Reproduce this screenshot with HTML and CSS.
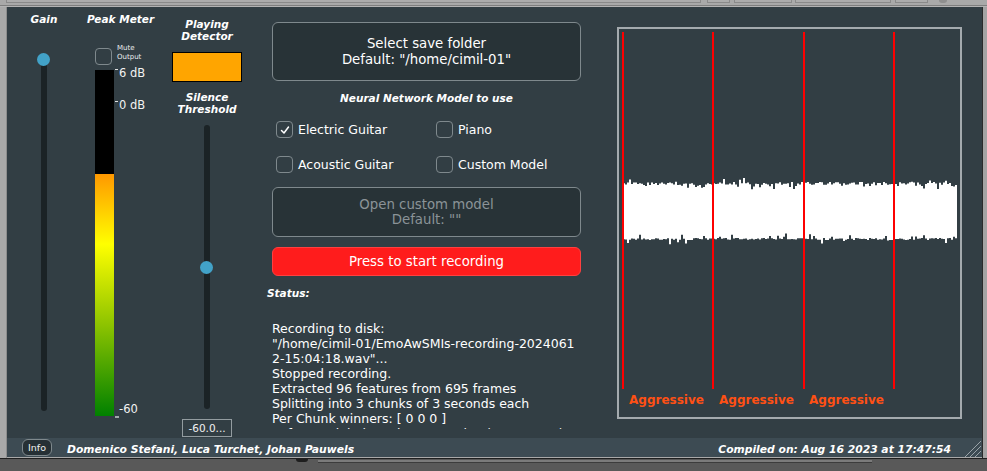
FILE: index.html
```html
<!DOCTYPE html>
<html>
<head>
<meta charset="utf-8">
<title>EmoAwSMIs</title>
<link rel="stylesheet" href="styles.css">
</head>
<body>
<div class="screen">
  <div class="titlestrip">
    <div class="tb tb1"></div>
    <div class="tb tb2"></div>
    <div class="tb tb3"></div>
    <div class="tb tb4"></div>
    <div class="tb tb5"></div>
    <div class="tb-dot"></div>
  </div>
  <div class="window">
    <div class="frame-left"></div>
    <div class="app">
      <div class="panel">
        <div class="col col-gain">
          <div class="label">Gain</div>
          <div class="vslider gain-slider">
            <div class="track"></div>
            <div class="thumb gain-thumb"></div>
          </div>
        </div>

        <div class="col col-meter">
          <div class="label">Peak Meter</div>
          <div class="mute-row">
            <div class="checkbox"></div>
            <div class="mute-text">Mute<br>Output</div>
          </div>
          <div class="meter-wrap">
            <div class="meter">
              <div class="meter-black"></div>
              <div class="meter-fill"></div>
            </div>
            <div class="meter-scale">
              <div class="tick tick-6"></div>
              <div class="scale-label sl-6">6 dB</div>
              <div class="tick tick-0"></div>
              <div class="scale-label sl-0">0 dB</div>
              <div class="scale-label sl-60">-60</div>
              <div class="tick tick-60"></div>
            </div>
          </div>
        </div>

        <div class="col col-detector">
          <div class="label label-2 playing-label">Playing<br>Detector</div>
          <div class="detector-box"></div>
          <div class="label label-2 silence-label">Silence<br>Threshold</div>
          <div class="vslider silence-slider">
            <div class="track"></div>
            <div class="thumb silence-thumb"></div>
          </div>
          <div class="value-box">-60.0...</div>
        </div>

        <div class="col col-mid">
          <div class="btn btn-folder">Select save folder<br>Default: "/home/cimil-01"</div>
          <div class="label model-label">Neural Network Model to use</div>
          <div class="model-grid">
            <div class="opt"><div class="checkbox checked"><svg viewBox="0 0 16 16" width="16" height="16"><polyline points="4.5,8.5 7,11 11.5,5" fill="none" stroke="#fff" stroke-width="1.5" stroke-linecap="round" stroke-linejoin="round"/></svg></div><span>Electric Guitar</span></div>
            <div class="opt"><div class="checkbox"></div><span>Piano</span></div>
            <div class="opt"><div class="checkbox"></div><span>Acoustic Guitar</span></div>
            <div class="opt"><div class="checkbox"></div><span>Custom Model</span></div>
          </div>
          <div class="btn btn-custom">Open custom model<br>Default: ""</div>
          <div class="btn btn-record">Press to start recording</div>
          <div class="label status-label">Status:</div>
          <div class="status-text">
            <div>Recording to disk:</div>
            <div>"/home/cimil-01/EmoAwSMIs-recording-2024061</div>
            <div>2-15:04:18.wav"...</div>
            <div>Stopped recording.</div>
            <div>Extracted 96 features from 695 frames</div>
            <div>Splitting into 3 chunks of 3 seconds each</div>
            <div>Per Chunk winners: [ 0 0 0 ]</div>
            <div>Softmax global result: Aggressive (1.00 / 0.00)</div>
          </div>
        </div>

        <div class="col col-wave">
          <div class="wave-box">
            <svg id="wave" class="wave-svg" width="341" height="388" viewBox="0 0 341 388">
              <path id="wave-path" fill="#ffffff" d=""/>
              <rect x="3" y="3" width="2" height="357" fill="#ff0000"/>
              <rect x="93" y="3" width="2" height="357" fill="#ff0000"/>
              <rect x="184" y="3" width="2" height="357" fill="#ff0000"/>
              <rect x="274" y="3" width="2" height="357" fill="#ff0000"/>
            </svg>
            <div class="chunk-label cl1">Aggressive</div>
            <div class="chunk-label cl2">Aggressive</div>
            <div class="chunk-label cl3">Aggressive</div>
          </div>
        </div>
      </div>

      <div class="bottombar">
        <div class="info-btn">Info</div>
        <div class="authors">Domenico Stefani, Luca Turchet, Johan Pauwels</div>
        <div class="compiled">Compiled on: Aug 16 2023 at 17:47:54</div>
        <div class="grip">
          <svg width="18" height="17" viewBox="0 0 18 17">
            <line x1="17" y1="1" x2="1" y2="17" stroke="#9aa3a8" stroke-width="1"/>
            <line x1="17" y1="6" x2="6" y2="17" stroke="#9aa3a8" stroke-width="1"/>
            <line x1="17" y1="11" x2="11" y2="17" stroke="#9aa3a8" stroke-width="1"/>
          </svg>
        </div>
      </div>
      <div class="app-edge"></div>
    </div>
    <div class="frame-right"></div>
  </div>
  <div class="desk">
    <div class="desk-blob"></div>
    <div class="desk-bar"></div>
  </div>
</div>
<script src="script.js"></script>
</body>
</html>
```

FILE: styles.css
```css
* { box-sizing: border-box; margin: 0; padding: 0; }
html, body { width: 987px; height: 471px; overflow: hidden; }
body {
  background: #5a5a5a;
  font-family: "DejaVu Sans", Verdana, sans-serif;
  color: #ffffff;
}
.screen { display: flex; flex-direction: column; width: 987px; height: 471px; }

/* top strip (bottom of a toolbar above the window) */
.titlestrip {
  height: 7px;
  display: flex;
  align-items: flex-start;
  background: linear-gradient(#a9a9a9 0 5px, #7e7e7e 5px 6px, #b3b3b3 6px);
  padding-left: 6px;
}
.tb {
  height: 3px;
  border: 1px solid #8a8a8a;
  border-top: none;
  background: #acacac;
}
.tb1 { width: 695px; }
.tb2 { width: 23px; margin-left: 6px; }
.tb3 { width: 58px; margin-left: 4px; }
.tb4 { width: 96px; margin-left: 3px; }
.tb5 { width: 33px; margin-left: 4px; }
.tb-dot { width: 8px; height: 3px; margin-left: 11px; background: #8f8f8f; border-radius: 0 0 4px 4px; }

.window { display: flex; height: 451px; }
.frame-left { width: 7px; background: #a9a9a9; border-right: 1px solid #8d8d8d; }
.frame-right { width: 5px; background: #a4a4a4; border-left: 1px solid #2b2b2b; }
.app { width: 975px; display: flex; flex-direction: column; }

.panel {
  height: 431px;
  background: #323e44;
  display: flex;
  align-items: flex-start;
  padding-top: 6px;
}
.col { display: flex; flex-direction: column; }

.label {
  font-weight: bold;
  font-style: italic;
  font-size: 10.5px;
  line-height: 13px;
  text-align: center;
  color: #ffffff;
}
.label-2 { line-height: 12px; }

/* Gain */
.col-gain { width: 74px; align-items: center; }
.vslider { position: relative; width: 14px; }
.vslider .track {
  position: absolute;
  left: 4px;
  width: 6px;
  border-radius: 3px;
  background: #1b2326;
}
.vslider .thumb {
  position: absolute;
  left: 0;
  width: 13px;
  height: 13px;
  border-radius: 50%;
  background: #42a2c8;
}
.gain-slider { margin-top: 27px; height: 358px; }
.gain-slider .track { top: 6px; bottom: 0; }
.gain-thumb { top: 0; }

/* Peak meter */
.col-meter { width: 79px; }
.col-meter .label { width: 79px; }
.mute-row { display: flex; align-items: center; margin-top: 22px; padding-left: 14px; }
.checkbox {
  width: 17px;
  height: 17px;
  border: 1.5px solid #7f898d;
  border-radius: 4px;
  flex: none;
}
.checkbox svg { display: block; margin: -0.5px 0 0 -0.5px; }
.mute-text { font-size: 7px; line-height: 8.5px; margin-left: 5px; color: #e8ecee; margin-top: -8px; }
.meter-wrap { display: flex; margin-top: 5px; padding-left: 14px; }
.meter { width: 19px; height: 346px; display: flex; flex-direction: column; }
.meter-black { height: 104px; background: #000000; }
.meter-fill { flex: 1; background: linear-gradient(to bottom, #ff9800 0%, #ffff00 29%, #8ec400 62%, #008000 100%); }
.meter-scale { position: relative; width: 40px; height: 346px; }
.tick { position: absolute; left: 1px; width: 3px; height: 1px; background: #e0e0e0; }
.tick-6 { top: -1px; }
.tick-0 { top: 31px; }
.tick-60 { top: 346px; height: 2px; width: 4px; background: #a0a8ac; }
.scale-label { position: absolute; left: 5px; font-size: 11.5px; line-height: 14px; color: #f2f2f2; white-space: nowrap; }
.sl-6 { top: -4px; }
.sl-0 { top: 28px; }
.sl-60 { top: 332px; }

/* Detector */
.col-detector { width: 94px; align-items: center; }
.playing-label { margin-top: 5px; }
.detector-box { width: 70px; height: 30px; margin-top: 10px; background: #ffa500; border: 1px solid #000000; }
.silence-label { margin-top: 9px; }
.silence-slider { margin-top: 6px; height: 292px; }
.silence-slider .track { top: 4px; bottom: 4px; }
.silence-thumb { top: 140px; }
.value-box {
  margin-top: 6px;
  width: 50px;
  height: 18px;
  border: 1px solid #939ca0;
  font-size: 10.5px;
  line-height: 16px;
  text-align: center;
  color: #f0f0f0;
}

/* Middle */
.col-mid { width: 309px; margin-left: 18px; padding-top: 9px; }
.btn {
  display: flex;
  align-items: center;
  justify-content: center;
  text-align: center;
  font-size: 13.3px;
  line-height: 16px;
  border-radius: 6px;
  border: 1px solid #7f898d;
  background: #283337;
  color: #ffffff;
}
.btn-folder { height: 59px; }
.model-label { margin-top: 11px; }
.model-grid {
  display: grid;
  grid-template-columns: 160px 140px;
  row-gap: 18px;
  margin-top: 16px;
  padding-left: 4px;
}
.opt { display: flex; align-items: center; font-size: 12.5px; line-height: 17px; }
.opt span { margin-left: 5px; }
.btn-custom { height: 50px; margin-top: 14px; color: #8b9398; line-height: 15px; }
.btn-record { height: 29px; margin-top: 10px; background: #ff1c1c; border-color: #ff4040; }
.status-label { margin-top: 11px; text-align: left; margin-left: -5px; }
.status-text {
  margin-top: 21px;
  height: 108px;
  overflow: hidden;
  font-size: 12.5px;
  line-height: 15px;
  color: #ffffff;
  white-space: nowrap;
}

/* Waveform */
.col-wave { margin-left: 36px; padding-top: 14px; }
.wave-box {
  position: relative;
  width: 345px;
  height: 392px;
  border: 2px solid #a4aaae;
}
.wave-svg { display: block; }
.chunk-label {
  position: absolute;
  top: 363px;
  font-size: 12px;
  line-height: 16px;
  font-weight: bold;
  color: #ff5014;
  white-space: nowrap;
}
.cl1 { left: 10px; }
.cl2 { left: 100px; }
.cl3 { left: 190px; }

/* Bottom bar */
.bottombar {
  height: 19px;
  background: #3d4b53;
  display: flex;
  align-items: center;
  padding-left: 15px;
}
.info-btn {
  width: 30px;
  height: 17px;
  border: 1px solid #7f898d;
  border-radius: 6px;
  background: #263035;
  font-size: 9.5px;
  line-height: 15px;
  text-align: center;
  color: #f0f0f0;
}
.authors, .compiled {
  font-weight: bold;
  font-style: italic;
  font-size: 10.75px;
  line-height: 13px;
  white-space: nowrap;
  margin-top: 4px;
}
.authors { margin-left: 15px; }
.compiled { margin-left: auto; }
.grip { width: 31px; height: 19px; display: flex; align-items: flex-end; justify-content: flex-end; }
.grip svg { display: block; }
.app-edge { height: 1px; background: #a9a9a9; }

.desk { flex: 1; position: relative; border-top: 1px solid #1f1f1f; background: #595959; }
.desk-blob { position: absolute; left: 296px; top: 0; width: 12px; height: 3px; border-radius: 0 0 6px 6px; background: #1e1e1e; }
.desk-bar { position: absolute; left: 318px; top: 1px; width: 554px; height: 3px; background: #7b7b7b; border-bottom: 1px solid #3c3c3c; }
```

FILE: script.js
```js
(function () {
  var s = 20240612;
  function r() { s = (s * 16807) % 2147483647; return s / 2147483647; }
  var xs = [], tops = [], bots = [];
  for (var x = 4; x < 338; x += 2) {
    var t = 153 + r() * 3;
    if (r() < 0.15) t += 2 + r() * 4;
    if (r() < 0.04) t -= 2 + r() * 4;
    var b = 211 - r() * 2;
    if (r() < 0.12) b -= 2 + r() * 3;
    if (r() < 0.05) b += 2 + r() * 3;
    xs.push(x); tops.push(t.toFixed(1)); bots.push(b.toFixed(1));
  }
  var d = 'M ' + xs[0] + ' ' + tops[0];
  for (var i = 0; i < xs.length; i++) {
    d += ' V ' + tops[i] + ' H ' + (xs[i] + 2);
  }
  for (var j = xs.length - 1; j >= 0; j--) {
    d += ' V ' + bots[j] + ' H ' + xs[j];
  }
  d += ' Z';
  document.getElementById('wave-path').setAttribute('d', d);
})();
```
